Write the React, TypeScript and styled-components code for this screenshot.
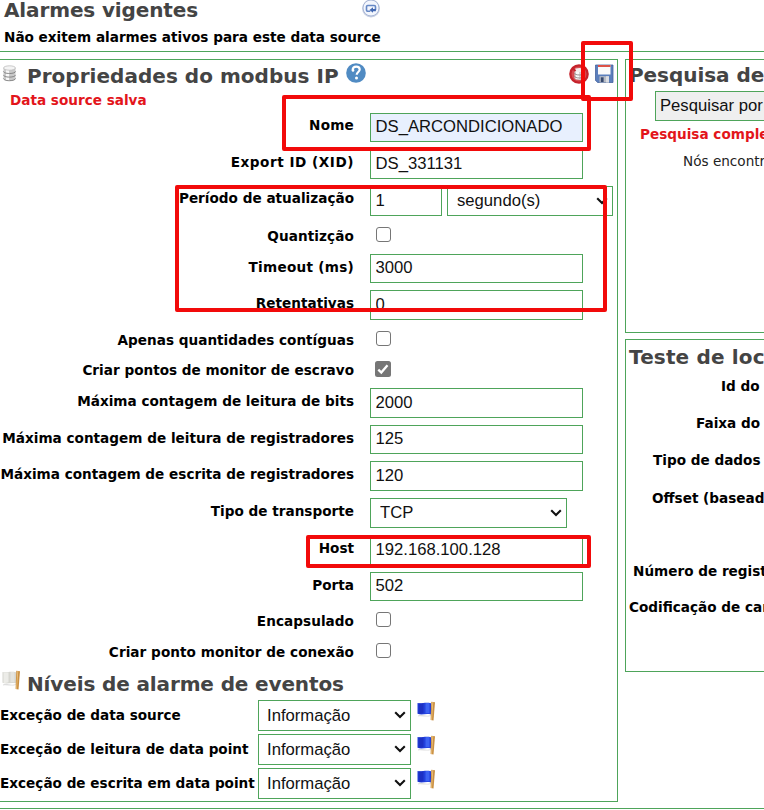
import React from 'react';
import styled, { createGlobalStyle } from 'styled-components';

const GREEN = '#4ea45a';
const UI_FONT = '"DejaVu Sans", Verdana, sans-serif';
const FIELD_FONT = '"Liberation Sans", Arial, sans-serif';

const GlobalStyle = createGlobalStyle`
  * { box-sizing: border-box; }
  body { margin: 0; background: #fff; overflow: hidden; }
`;

const Page = styled.main`
  position: relative;
  width: 764px;
  height: 810px;
  overflow: hidden;
  background: #fff;
  color: #000;
  font-family: ${UI_FONT};
  font-size: 13.6px;
  white-space: nowrap;
`;

const AlarmHeader = styled.header`
  display: flex;
  flex-direction: column;
  height: 52px;
  padding-left: 4px;
  border-bottom: 1px solid ${GREEN};
`;

const AlarmTitleRow = styled.div`
  display: flex;
  justify-content: space-between;
  width: 377px;
  height: 28px;
`;

const Heading = styled.h2<{ $h: number; $track?: number }>`
  margin: 0;
  height: ${(p) => p.$h}px;
  line-height: ${(p) => p.$h}px;
  font-size: 20px;
  font-weight: bold;
  letter-spacing: ${(p) => p.$track ?? -0.13}px;
  color: #444;
`;

const AlarmNote = styled.p`
  margin: 0;
  line-height: 18px;
  font-weight: bold;
`;

const Columns = styled.div`
  display: flex;
  align-items: flex-start;
  gap: 7px;
  height: 757px;
  padding-top: 7px;
  border-bottom: 1px solid ${GREEN};
`;

const SourcePanel = styled.section`
  flex: none;
  width: 618px;
  height: 743px;
  border: solid ${GREEN};
  border-width: 1px 1px 1px 0;
`;

const SideColumn = styled.div`
  flex: none;
  display: flex;
  flex-direction: column;
  gap: 6px;
  width: 300px;
`;

const SidePanel = styled.section<{ $h: number }>`
  height: ${(p) => p.$h}px;
  padding-left: 3px;
  border: 1px solid ${GREEN};
`;

const TitleRow = styled.div`
  display: flex;
  height: 32px;
  padding-left: 2px;
`;

const TitleIcon = styled.span<{ $w: number; $top: number }>`
  flex: none;
  width: ${(p) => p.$w}px;
  padding-top: ${(p) => p.$top}px;
  line-height: 0;
`;

const HelpLink = styled.span`
  padding: 3px 0 0 7px;
  line-height: 0;
`;

const Tools = styled.div`
  display: flex;
  gap: 6px;
  margin-left: auto;
  padding: 4px 3px 0 0;
`;

const Notice = styled.p<{ $indent: number; $h: number }>`
  margin: 0;
  padding-left: ${(p) => p.$indent}px;
  line-height: ${(p) => p.$h}px;
  font-weight: bold;
  color: #e3151b;
`;

const Form = styled.div`
  padding-top: 5px;
`;

const FormRow = styled.div<{ $h: number; $after: number }>`
  display: grid;
  grid-template-columns: 354px 1fr;
  column-gap: 16px;
  height: ${(p) => p.$h}px;
  margin-bottom: ${(p) => p.$after}px;
`;

const FieldLabel = styled.label<{ $lift: number; $track?: number }>`
  justify-self: end;
  height: 20px;
  line-height: 20px;
  margin-top: ${(p) => p.$lift}px;
  letter-spacing: ${(p) => p.$track ?? 0.01}px;
  font-weight: bold;
`;

const FieldCell = styled.div`
  display: flex;
  gap: 5px;
`;

const TextField = styled.input<{ $w: number; $filled?: boolean }>`
  width: ${(p) => p.$w}px;
  height: 100%;
  margin: 0;
  padding: 0 4px 1px 4.5px;
  border: 1px solid ${GREEN};
  border-radius: 0;
  background: ${(p) => (p.$filled ? '#e8f0fe' : '#fff')};
  color: #111;
  font: 16.67px ${FIELD_FONT};
  outline: none;
`;

const SelectFrame = styled.div<{ $w: number; $indent: number }>`
  display: flex;
  align-items: center;
  width: ${(p) => p.$w}px;
  height: 100%;
  padding: 0 4px 1px ${(p) => p.$indent}px;
  border: 1px solid ${GREEN};
`;

const NativeSelect = styled.select`
  appearance: none;
  flex: 1;
  min-width: 0;
  padding: 0;
  border: 0;
  background: transparent;
  color: #111;
  font: 16.67px ${FIELD_FONT};
  outline: none;
`;

const Check = styled.input`
  appearance: none;
  display: block;
  width: 15px;
  height: 15px;
  margin: 0 0 0 6px;
  border: 1px solid #767676;
  border-radius: 3px;
  background: #fff;
`;

const CheckedMark = styled.svg`
  display: block;
  margin-left: 5px;
`;

const Levels = styled.div`
  display: flex;
  flex-direction: column;
  gap: 3px;
`;

const LevelRow = styled.div`
  display: grid;
  grid-template-columns: 258px 153px auto;
  height: 31px;
`;

const LevelLabel = styled.label`
  line-height: 31px;
  font-weight: bold;
`;

const LevelFlag = styled.span`
  padding: 1px 0 0 6px;
  line-height: 0;
`;

const SearchButton = styled.button`
  display: block;
  width: 220px;
  height: 30px;
  margin-left: 26px;
  padding: 0 0 1px 4px;
  border: 1px solid ${GREEN};
  background: #efefef;
  color: #111;
  font: 16.67px ${FIELD_FONT};
  text-align: left;
`;

const FoundNote = styled.p`
  margin: 0;
  padding: 5px 0 0 54px;
  line-height: 18px;
  font-size: 13.6px;
  color: #222;
`;

const SideLabel = styled.div<{ $indent: number; $h: number }>`
  height: ${(p) => p.$h}px;
  line-height: 20px;
  padding-left: ${(p) => p.$indent}px;
  font-weight: bold;
`;

const SideLabels = styled.div`
  padding-top: 2px;
`;

/* Red annotation frames lie over the form. */
const Marker = styled.div<{ $x: number; $y: number; $w: number; $h: number }>`
  position: absolute;
  left: ${(p) => p.$x}px;
  top: ${(p) => p.$y}px;
  width: ${(p) => p.$w}px;
  height: ${(p) => p.$h}px;
  border: 4px solid #f20a0a;
  border-radius: 2px;
  pointer-events: none;
`;

const Chevron = () => (
  <svg width="12" height="8" viewBox="0 0 12 8">
    <path d="M1.2 1.3 6 6 10.8 1.3" fill="none" stroke="#111" strokeWidth="2.1" />
  </svg>
);

const RefreshIcon = () => (
  <svg width="20" height="19" viewBox="0 0 20 19">
    <circle cx="10" cy="8.500" r="9" fill="#c9d1e3" />
    <circle cx="10" cy="8" r="8" fill="#f3f6fd" stroke="#a9b7d6" />
    <path d="M9.300 11.300H6.800a1.300 1.300 0 0 1-1.300-1.300V6.800a1.300 1.300 0 0 1 1.300-1.300h6.400a1.300 1.300 0 0 1 1.300 1.300V10" fill="none" stroke="#6688c5" strokeWidth="1.600" />
    <path d="M8.500 10 12 7.300V9h2.900v2.200H12v1.600Z" fill="#4268b2" />
  </svg>
);

const DatabaseIcon = () => (
  <svg width="15" height="17" viewBox="0 0 15 17">
    <path d="M1.500 3v10.500c0 1.300 2.500 2.300 6 2.300s6-1 6-2.300V3Z" fill="#c9c9c9" />
    <path d="M4 4v11.200c1 .3 2 .4 3 .4V4Z" fill="#f7f7f7" />
    <ellipse cx="7.500" cy="3" rx="6" ry="2.200" fill="#f4f4f4" stroke="#bcbcbc" strokeWidth=".8" />
    <path d="M1.500 6.300c0 1.300 2.500 2.200 6 2.200s6-.9 6-2.200M1.500 9.900c0 1.300 2.500 2.200 6 2.200s6-.9 6-2.200M1.500 13.400c0 1.300 2.500 2.300 6 2.300s6-1 6-2.300" fill="none" stroke="#858585" strokeWidth="1" />
  </svg>
);

const HelpIcon = () => (
  <svg width="20" height="20" viewBox="0 0 20 20">
    <circle cx="10" cy="10" r="9.800" fill="#508bc3" />
    <path d="M6.700 7.200c0-2.200 1.400-3.500 3.500-3.500s3.500 1.200 3.500 2.900c0 2.300-3 2.500-3 5.100" fill="none" stroke="#fff" strokeWidth="2.200" />
    <circle cx="10.500" cy="15" r="1.500" fill="#fff" />
    <circle cx="7" cy="7.400" r="1.300" fill="#fff" />
  </svg>
);

const SourceOffIcon = () => (
  <svg width="20" height="20" viewBox="0 0 20 20">
    <circle cx="10" cy="10" r="9.800" fill="#c5222b" />
    <circle cx="10" cy="10" r="7.500" fill="#d64b50" />
    <path d="M5.500 6v8c0 1.200 2 2 5 2s5-.8 5-2V6Z" fill="#d9d2d2" />
    <path d="M7 6v9h3V6Z" fill="#fafafa" />
    <ellipse cx="10.500" cy="6" rx="5" ry="1.900" fill="#f3eeee" />
    <path d="M5.500 9c0 1.200 2 2 5 2s5-.8 5-2M5.500 12c0 1.200 2 2 5 2s5-.8 5-2" fill="none" stroke="#8e8585" strokeWidth=".9" />
    <path d="m3.500 4 3 3" stroke="#c5222b" strokeWidth="2" />
  </svg>
);

const SaveIcon = () => (
  <svg width="19" height="19" viewBox="0 0 19 19">
    <path d="M.5 1H18v17.500H2.500L.5 16.300Z" fill="#5b7fbc" stroke="#46649e" strokeWidth=".8" />
    <path d="M3 1h12.500v9.500H3Z" fill="#fafafa" />
    <path d="M3 1h12.500v2H3Z" fill="#dc5248" />
    <path d="M4.500 12.200H14v6.300H4.500Z" fill="#b7bcc5" />
    <path d="M5.800 13.300h2.800v4.700H5.800Z" fill="#36486d" />
    <path d="M11 12.200h3v6.300h-3Z" fill="#dadde2" />
  </svg>
);

const FlagIcon = ({ plain = false }: { plain?: boolean }) => (
  <svg width="19" height="20" viewBox="0 0 19 20">
    <path d="M1 14.500c4-1.500 8 1.500 13-.5v1c-5 1.500-9-.5-13 .5Z" fill="#dedede" />
    <path d="M.5 2c4 1.200 7-1 13.500.3v11.200C9 12 5 14.500.5 12.700Z" fill={plain ? '#d6d6d0' : '#2340dc'} />
    <path d="M1.500 2.300c2 .4 3.500.1 5-.1v10c-2 .7-3.500.9-5 .5Z" fill={plain ? '#ecece8' : '#1c30c4'} />
    <path d="M8.500 2.200c1.500-.2 3-.2 4 0v10.300c-1.300-.3-2.500-.2-4 0Z" fill={plain ? '#e4e4df' : '#3d63f2'} />
    <path d="m14.300.8 3.700.4-1.500 18.300-2.900-.4Z" fill="#c98f42" />
    <path d="m15.300 1 1 .1-1.300 18-.9-.1Z" fill="#e9bd78" />
  </svg>
);

type Field =
  | { kind: 'text'; value: string; filled?: boolean }
  | { kind: 'period'; value: string; unit: string }
  | { kind: 'select'; value: string }
  | { kind: 'check'; on?: boolean };

/* h: height of the control, after: space below it, lift: offset of the label */
type Row = { label: string; h: number; after: number; lift: number; track?: number; field: Field };

const rows: Row[] = [
  { label: 'Nome', h: 29, after: 8, lift: 2, track: 0.2, field: { kind: 'text', value: 'DS_ARCONDICIONADO', filled: true } },
  { label: 'Export ID (XID)', h: 29, after: 7, lift: 2, track: 0.53, field: { kind: 'text', value: 'DS_331131' } },
  { label: 'Período de atualização', h: 30, after: 11, lift: 2, field: { kind: 'period', value: '1', unit: 'segundo(s)' } },
  { label: 'Quantizção', h: 15, after: 12, lift: -1, track: 0.1, field: { kind: 'check' } },
  { label: 'Timeout (ms)', h: 29, after: 7, lift: 3, track: 0.27, field: { kind: 'text', value: '3000' } },
  { label: 'Retentativas', h: 30, after: 11, lift: 3, field: { kind: 'text', value: '0' } },
  { label: 'Apenas quantidades contíguas', h: 15, after: 15, lift: -1, field: { kind: 'check' } },
  { label: 'Criar pontos de monitor de escravo', h: 16, after: 11, lift: -1, field: { kind: 'check', on: true } },
  { label: 'Máxima contagem de leitura de bits', h: 30, after: 7, lift: 3, field: { kind: 'text', value: '2000' } },
  { label: 'Máxima contagem de leitura de registradores', h: 29, after: 7, lift: 3, field: { kind: 'text', value: '125' } },
  { label: 'Máxima contagem de escrita de registradores', h: 30, after: 7, lift: 3, field: { kind: 'text', value: '120' } },
  { label: 'Tipo de transporte', h: 30, after: 7, lift: 3, field: { kind: 'select', value: 'TCP' } },
  { label: 'Host', h: 30, after: 7, lift: 3, field: { kind: 'text', value: '192.168.100.128' } },
  { label: 'Porta', h: 29, after: 11, lift: 3, field: { kind: 'text', value: '502' } },
  { label: 'Encapsulado', h: 15, after: 16, lift: -1, track: 0.05, field: { kind: 'check' } },
  { label: 'Criar ponto monitor de conexão', h: 15, after: 10, lift: -1, track: 0.05, field: { kind: 'check' } },
];

const levels = ['Exceção de data source', 'Exceção de leitura de data point', 'Exceção de escrita em data point'];

const sideLabels = [
  { text: 'Id do', indent: 92, h: 37 },
  { text: 'Faixa do', indent: 67, h: 37 },
  { text: 'Tipo de dados', indent: 24, h: 38 },
  { text: 'Offset (baseado em 0)', indent: 23, h: 73 },
  { text: 'Número de registradores', indent: 4, h: 36 },
  { text: 'Codificação de caracteres', indent: 0, h: 36 },
];

const Select = ({ value, width, indent = 8 }: { value: string; width: number; indent?: number }) => (
  <SelectFrame $w={width} $indent={indent}>
    <NativeSelect defaultValue={value}>
      <option>{value}</option>
    </NativeSelect>
    <Chevron />
  </SelectFrame>
);

const Control = ({ field }: { field: Field }) => {
  switch (field.kind) {
    case 'text':
      return <TextField $w={213} $filled={field.filled} defaultValue={field.value} />;
    case 'period':
      return (
        <>
          <TextField $w={72} defaultValue={field.value} />
          <Select value={field.unit} width={166} indent={9} />
        </>
      );
    case 'select':
      return <Select value={field.value} width={197} indent={9} />;
    case 'check':
      return field.on ? (
        <CheckedMark width="16" height="16" viewBox="0 0 16 16" role="checkbox" aria-checked="true">
          <rect width="16" height="16" rx="2.500" fill="#767676" />
          <path d="m3.300 8.600 3 3 6.200-7.400" fill="none" stroke="#fff" strokeWidth="2.300" />
        </CheckedMark>
      ) : (
        <Check type="checkbox" />
      );
  }
};

export default function App() {
  return (
    <Page>
      <GlobalStyle />
      <AlarmHeader>
        <AlarmTitleRow>
          <Heading $h={21}>Alarmes vigentes</Heading>
          <RefreshIcon />
        </AlarmTitleRow>
        <AlarmNote>Não exitem alarmes ativos para este data source</AlarmNote>
      </AlarmHeader>

      <Columns>
        <SourcePanel>
          <TitleRow>
            <TitleIcon $w={25} $top={5}><DatabaseIcon /></TitleIcon>
            <Heading $h={33} $track={0.03}>Propriedades do modbus IP</Heading>
            <HelpLink><HelpIcon /></HelpLink>
            <Tools>
              <SourceOffIcon />
              <SaveIcon />
            </Tools>
          </TitleRow>
          <Notice $indent={10} $h={16}>Data source salva</Notice>
          <Form>
            {rows.map((r) => (
              <FormRow key={r.label} $h={r.h} $after={r.after}>
                <FieldLabel $lift={r.lift} $track={r.track}>{r.label}</FieldLabel>
                <FieldCell>
                  <Control field={r.field} />
                </FieldCell>
              </FormRow>
            ))}
          </Form>
          <TitleRow>
            <TitleIcon $w={25} $top={2}><FlagIcon plain /></TitleIcon>
            <Heading $h={32}>Níveis de alarme de eventos</Heading>
          </TitleRow>
          <Levels>
            {levels.map((text) => (
              <LevelRow key={text}>
                <LevelLabel>{text}</LevelLabel>
                <Select value="Informação" width={153} />
                <LevelFlag><FlagIcon /></LevelFlag>
              </LevelRow>
            ))}
          </Levels>
        </SourcePanel>

        <SideColumn>
          <SidePanel $h={274}>
            <Heading $h={31} $track={-0.05}>Pesquisa de nós</Heading>
            <SearchButton>Pesquisar por nós</SearchButton>
            <Notice $indent={11} $h={26}>Pesquisa completa</Notice>
            <FoundNote>Nós encontrados</FoundNote>
          </SidePanel>
          <SidePanel $h={333}>
            <Heading $h={34} $track={0.15}>Teste de localizador</Heading>
            <SideLabels>
              {sideLabels.map((l) => (
                <SideLabel key={l.text} $indent={l.indent} $h={l.h}>{l.text}</SideLabel>
              ))}
            </SideLabels>
          </SidePanel>
        </SideColumn>
      </Columns>

      <Marker $x={282} $y={95} $w={309} $h={56} />
      <Marker $x={581} $y={41} $w={52} $h={60} />
      <Marker $x={175} $y={185} $w={432} $h={127} />
      <Marker $x={306} $y={535} $w={285} $h={33} />
    </Page>
  );
}
